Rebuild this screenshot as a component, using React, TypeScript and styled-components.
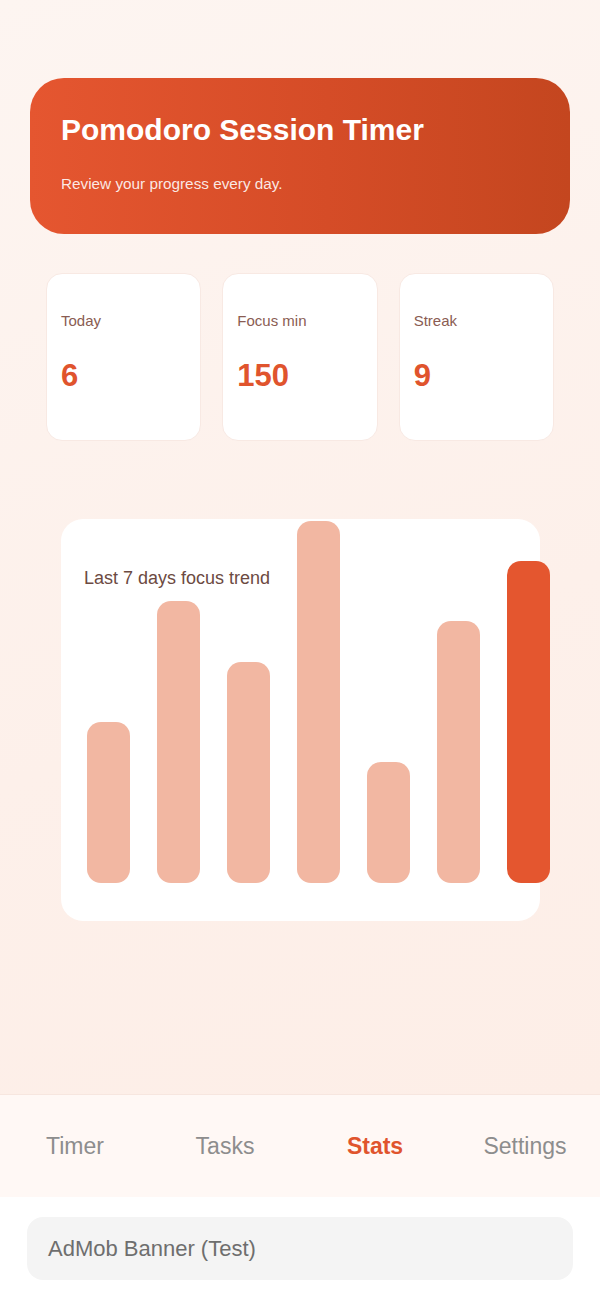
import styled, { createGlobalStyle } from 'styled-components'

const GlobalStyle = createGlobalStyle`
	html, body {
		margin: 0;
		padding: 0;
	}
	body {
		font-family: "Liberation Sans", Arial, sans-serif;
		-webkit-font-smoothing: antialiased;
	}
	* {
		box-sizing: border-box;
	}
`

const Screen = styled.div`
	display: flex;
	flex-direction: column;
	min-height: 100vh;
	background: #ffffff;
`

const Main = styled.main`
	flex: 1;
	padding: 78px 30px 0;
	background: linear-gradient(160deg, #fdf5f1 0%, #fdf0ea 60%, #fdeee7 100%);
`

const Hero = styled.section`
	height: 156px;
	padding: 34px 31px 0;
	border-radius: 34px;
	background: linear-gradient(90deg, #e55630 0%, #d54c27 55%, #c4461f 100%);
	color: #ffffff;
`

const HeroTitle = styled.h1`
	margin: 0;
	font-size: 30px;
	line-height: 36px;
	font-weight: 700;
`

const HeroText = styled.p`
	margin: 25px 0 0;
	font-size: 15.3px;
	line-height: 21px;
	color: rgba(255, 255, 255, 0.88);
`

const StatsRow = styled.div`
	display: grid;
	grid-template-columns: repeat(3, 1fr);
	gap: 21px;
	margin-top: 39px;
	padding: 0 16px;
`

const StatCard = styled.div`
	height: 168px;
	padding: 38px 14px 0;
	border-radius: 16px;
	background: #ffffff;
	border: 1px solid #f8e9e3;
`

const StatLabel = styled.div`
	font-size: 15px;
	line-height: 18px;
	color: #8a5c52;
`

const StatValue = styled.div`
	margin-top: 28px;
	font-size: 31px;
	line-height: 36px;
	font-weight: 700;
	color: #e0542d;
`

const ChartCard = styled.section`
	display: flex;
	flex-direction: column;
	height: 402px;
	margin: 78px 30px 0 31px;
	padding: 48px 0 38px 23px;
	border-radius: 22px;
	background: #ffffff;
`

const ChartTitle = styled.h2`
	margin: 0;
	font-size: 18px;
	line-height: 22px;
	font-weight: 400;
	color: #6c4a42;
`

const Bars = styled.div`
	flex: 1;
	display: flex;
	align-items: flex-end;
	gap: 27px;
	min-height: 0;
	padding-left: 3px;
`

const Bar = styled.div<{ $active?: boolean }>`
	flex: 0 0 43px;
	border-radius: 14px;
	background: ${(p) => (p.$active ? '#e4562f' : '#f2b7a2')};
`

const TabBar = styled.nav`
	display: grid;
	grid-template-columns: repeat(4, 1fr);
	align-items: center;
	height: 103px;
	border-top: 1px solid #f7e6df;
	background: #fff8f5;
`

const Tab = styled.div<{ $active?: boolean }>`
	text-align: center;
	font-size: 23px;
	font-weight: ${(p) => (p.$active ? 700 : 400)};
	color: ${(p) => (p.$active ? '#e0542d' : '#8d8d8d')};
`

const AdArea = styled.div`
	padding: 20px 27px 19px;
	background: #ffffff;
`

const Banner = styled.div`
	display: flex;
	align-items: center;
	height: 63px;
	padding-left: 21px;
	border-radius: 16px;
	background: #f4f4f4;
	font-size: 22px;
	color: #6e6e6e;
`

const stats = [
	{ label: 'Today', value: '6' },
	{ label: 'Focus min', value: '150' },
	{ label: 'Streak', value: '9' },
]

const week = [161, 282, 221, 362, 121, 262, 322]

const tabs = ['Timer', 'Tasks', 'Stats', 'Settings']

const App = (): JSX.Element => (
	<Screen>
		<GlobalStyle />
		<Main>
			<Hero>
				<HeroTitle>Pomodoro Session Timer</HeroTitle>
				<HeroText>Review your progress every day.</HeroText>
			</Hero>

			<StatsRow>
				{stats.map((s) => (
					<StatCard key={s.label}>
						<StatLabel>{s.label}</StatLabel>
						<StatValue>{s.value}</StatValue>
					</StatCard>
				))}
			</StatsRow>

			<ChartCard>
				<ChartTitle>Last 7 days focus trend</ChartTitle>
				<Bars>
					{week.map((h, i) => (
						<Bar key={i} $active={i === week.length - 1} style={{ height: h }} />
					))}
				</Bars>
			</ChartCard>
		</Main>

		<TabBar>
			{tabs.map((t) => (
				<Tab key={t} $active={t === 'Stats'}>
					{t}
				</Tab>
			))}
		</TabBar>

		<AdArea>
			<Banner>AdMob Banner (Test)</Banner>
		</AdArea>
	</Screen>
)

export default App
